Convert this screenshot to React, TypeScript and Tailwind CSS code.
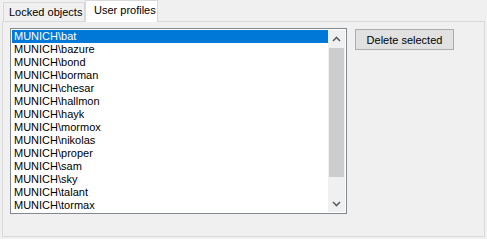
import React from "react";

const users = [
  "bat",
  "bazure",
  "bond",
  "borman",
  "chesar",
  "hallmon",
  "hayk",
  "mormox",
  "nikolas",
  "proper",
  "sam",
  "sky",
  "talant",
  "tormax",
];

function Chevron({ up }: { up?: boolean }) {
  return (
    <svg width="9" height="6" viewBox="0 0 9 6">
      <path
        d={up ? "M1 5 L4.5 1.5 L8 5" : "M1 1 L4.5 4.5 L8 1"}
        fill="none"
        stroke="#606060"
        strokeWidth="1.6"
      />
    </svg>
  );
}

export default function App() {
  return (
    <div
      className="w-[487px] h-[239px] bg-[#f0f0f0] text-black overflow-hidden"
      style={{ fontFamily: '"Liberation Sans", Arial, sans-serif' }}
    >
      {/* tabs */}
      <div className="flex items-end h-[21px] pl-[3px]">
        <div className="h-[19px] w-[82px] border border-b-0 border-[#d9d9d9] bg-[#f0f0f0] pl-[5px] pt-[3px] text-[11px] leading-[13px] whitespace-nowrap">
          Locked objects
        </div>
        <div className="h-[22px] w-[73px] -mb-px relative z-10 border border-b-0 border-[#d9d9d9] bg-white pl-[8px] pt-[3px] text-[11px] leading-[13px] whitespace-nowrap">
          User profiles
        </div>
      </div>

      {/* panel */}
      <div className="ml-[2px] w-[483px] h-[216px] border border-[#d9d9d9] bg-[#f0f0f0] flex items-start pl-[7px] pt-[6px]">
        <div className="w-[337px] h-[186px] border border-[#828790] bg-white p-px flex">
          <div className="flex-1 flex flex-col text-[11px]">
            {users.map((u, i) => (
              <div
                key={u}
                className={`h-[13px] leading-[13px] pl-[2px] whitespace-nowrap ${
                  i === 0 ? "bg-[#0078d7] text-white" : ""
                }`}
              >
                MUNICH\{u}
              </div>
            ))}
          </div>
          <div className="w-[17px] h-full bg-[#f0f0f0] flex flex-col">
            <div className="h-[17px] flex items-center justify-center">
              <Chevron up />
            </div>
            <div className="mt-[1px] h-[129px] mx-px bg-[#cdcdcd]" />
            <div className="flex-1" />
            <div className="h-[17px] flex items-center justify-center">
              <Chevron />
            </div>
          </div>
        </div>
        <button className="ml-[8px] mt-px w-[99px] h-[21px] border border-[#adadad] bg-[#e1e1e1] text-[11px] leading-[14px]">
          Delete selected
        </button>
      </div>
    </div>
  );
}
